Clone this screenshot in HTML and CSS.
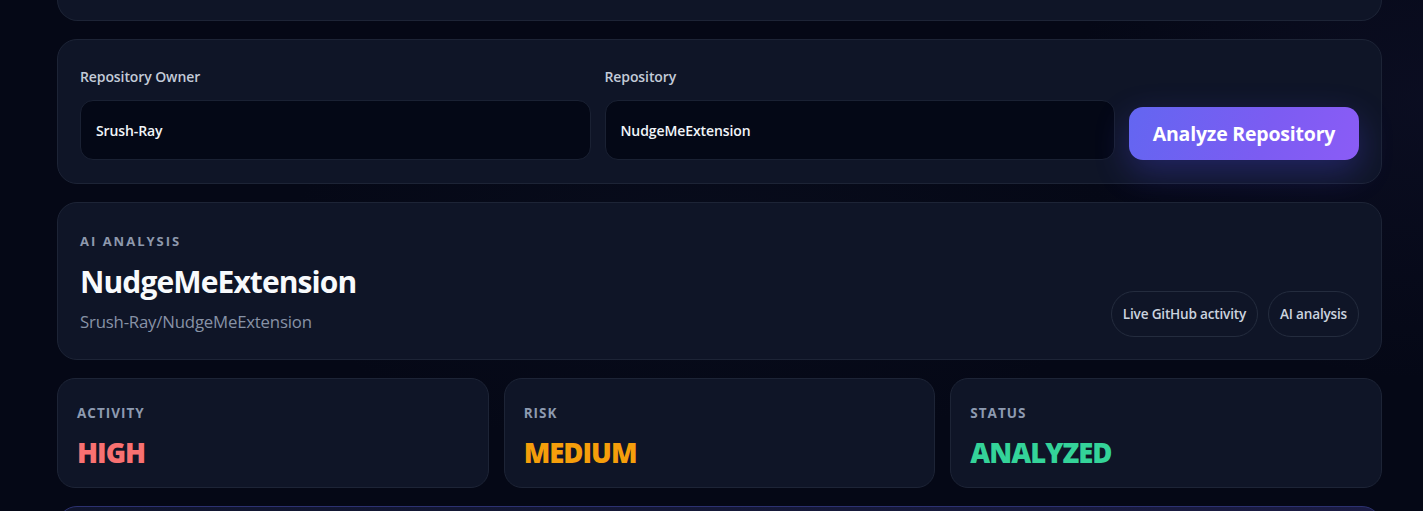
FILE: index.html
```html
<!DOCTYPE html>
<html lang="en">
<head>
<meta charset="utf-8">
<title>Repository Analysis</title>
<link rel="stylesheet" href="styles.css">
</head>
<body>
<main class="page">
  <div class="card card-top"></div>

  <form class="card search">
    <div class="field">
      <label class="field-label" for="owner">Repository Owner</label>
      <input class="field-input" id="owner" type="text" value="Srush-Ray">
    </div>
    <div class="field">
      <label class="field-label" for="repo">Repository</label>
      <input class="field-input" id="repo" type="text" value="NudgeMeExtension">
    </div>
    <button class="analyze-btn" type="button">Analyze Repository</button>
  </form>

  <section class="card analysis">
    <div class="analysis-main">
      <div class="eyebrow">AI ANALYSIS</div>
      <h1 class="repo-title">NudgeMeExtension</h1>
      <div class="repo-path">Srush-Ray/NudgeMeExtension</div>
    </div>
    <div class="pills">
      <span class="pill">Live GitHub activity</span>
      <span class="pill">AI analysis</span>
    </div>
  </section>

  <div class="stats">
    <div class="card stat">
      <div class="stat-label">ACTIVITY</div>
      <div class="stat-value high">HIGH</div>
    </div>
    <div class="card stat">
      <div class="stat-label">RISK</div>
      <div class="stat-value medium">MEDIUM</div>
    </div>
    <div class="card stat">
      <div class="stat-label">STATUS</div>
      <div class="stat-value ok">ANALYZED</div>
    </div>
  </div>

  <div class="card card-bottom"></div>
</main>
</body>
</html>
```

FILE: styles.css
```css
* { box-sizing: border-box; }

html, body {
  margin: 0;
  height: 100%;
  overflow: hidden;
}

body {
  font-family: "Open Sans", "Noto Sans", "DejaVu Sans", sans-serif;
  color: #e2e8f0;
  background:
    radial-gradient(ellipse 500px 400px at 1423px 100px, rgba(40, 40, 90, 0.16), transparent 70%),
    radial-gradient(ellipse 600px 300px at 700px 250px, rgba(30, 41, 70, 0.12), transparent 70%),
    #050816;
}

.page {
  display: flex;
  flex-direction: column;
  gap: 18px;
  padding: 0 41px 0 57px;
}

.card {
  background: #0f1527;
  border: 1px solid #1d2436;
  border-radius: 20px;
}

.card-top {
  height: 21px;
  border-top: none;
  border-radius: 0 0 24px 24px;
}

/* search form */
.search {
  display: grid;
  grid-template-columns: 1fr 1fr 230px;
  column-gap: 14px;
  align-items: end;
  padding: 28px 22px 23px;
  margin: 0;
}

.field {
  display: flex;
  flex-direction: column;
}

.field-label {
  font-size: 14px;
  font-weight: 600;
  line-height: 18px;
  color: #c3cbd8;
  margin-bottom: 14px;
  letter-spacing: -0.1px;
}

.field-input {
  height: 60px;
  border-radius: 13px;
  border: 1px solid #1a2133;
  background: #040816;
  color: #f1f5f9;
  font-family: inherit;
  font-size: 14px;
  font-weight: 600;
  padding: 0 15px;
  outline: none;
  letter-spacing: -0.1px;
}

.analyze-btn {
  height: 53px;
  border: none;
  border-radius: 14px;
  background: linear-gradient(110deg, #6366f1 0%, #7c5cf2 60%, #8b5cf6 100%);
  color: #ffffff;
  font-family: inherit;
  font-size: 19.5px;
  font-weight: 700;
  letter-spacing: -0.2px;
  box-shadow: 0 12px 34px rgba(79, 70, 229, 0.32);
  cursor: pointer;
}

/* analysis card */
.analysis {
  display: flex;
  justify-content: space-between;
  align-items: flex-end;
  padding: 29px 22px 22px;
}

.eyebrow {
  font-size: 13px;
  font-weight: 700;
  line-height: 18px;
  letter-spacing: 2px;
  color: #8e99ad;
}

.repo-title {
  margin: 14px 0 0;
  font-size: 30px;
  font-weight: 700;
  line-height: 36px;
  letter-spacing: -0.9px;
  color: #f8fafc;
}

.repo-path {
  margin-top: 10px;
  padding-bottom: 3px;
  font-size: 16.8px;
  line-height: 24px;
  color: #8792a6;
  letter-spacing: -0.2px;
}

.pills {
  display: flex;
  gap: 10px;
}

.pill {
  display: inline-block;
  height: 46px;
  line-height: 44px;
  padding: 0 11px;
  border: 1px solid #242c3e;
  border-radius: 999px;
  font-size: 13.6px;
  font-weight: 600;
  color: #cbd3df;
  letter-spacing: -0.2px;
}

/* stats */
.stats {
  display: grid;
  grid-template-columns: repeat(3, 1fr);
  gap: 15px;
}

.stat {
  border-radius: 18px;
  padding: 25px 19px 17px;
}

.stat-label {
  font-size: 13.5px;
  font-weight: 700;
  line-height: 18px;
  letter-spacing: 1px;
  color: #8d9ab0;
}

.stat-value {
  margin-top: 14px;
  font-size: 27.5px;
  font-weight: 800;
  line-height: 34px;
  letter-spacing: -1px;
}

.high { color: #f87171; }
.medium { color: #f59e0b; }
.ok { color: #34d399; }

.card-bottom {
  height: 60px;
  border-color: #2c3170;
  background: linear-gradient(90deg, #10152e, #16193a 60%, #1b1c44);
}
```
